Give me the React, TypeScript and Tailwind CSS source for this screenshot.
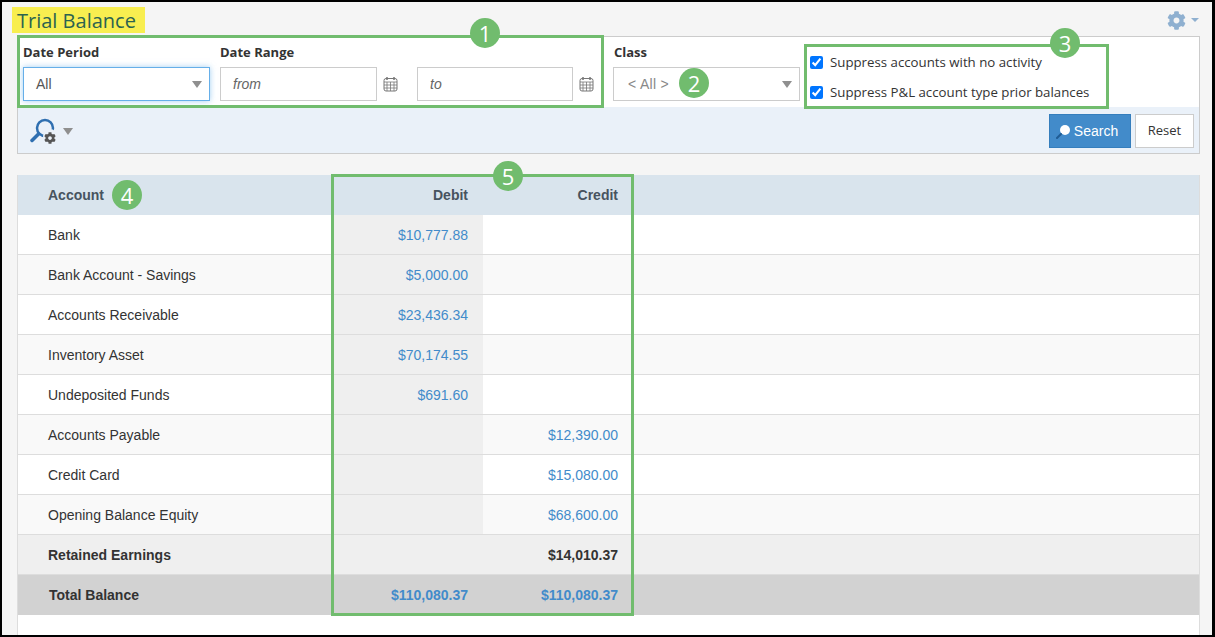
import { FaCog } from "react-icons/fa";

const openSans = "font-['Open_Sans',sans-serif]";

const rows = [
  { name: "Bank", debit: "$10,777.88", credit: "" },
  { name: "Bank Account - Savings", debit: "$5,000.00", credit: "" },
  { name: "Accounts Receivable", debit: "$23,436.34", credit: "" },
  { name: "Inventory Asset", debit: "$70,174.55", credit: "" },
  { name: "Undeposited Funds", debit: "$691.60", credit: "" },
  { name: "Accounts Payable", debit: "", credit: "$12,390.00" },
  { name: "Credit Card", debit: "", credit: "$15,080.00" },
  { name: "Opening Balance Equity", debit: "", credit: "$68,600.00" },
];

function Caret() {
  return <span className="w-0 h-0 border-l-[5px] border-r-[5px] border-t-[7px] border-l-transparent border-r-transparent border-t-[#8f8f8f]" />;
}

function CalendarIcon() {
  return (
    <svg width="15" height="16" viewBox="0 0 15 16" fill="none" stroke="#777" strokeWidth="1">
      <rect x="1" y="2.5" width="13" height="12.5" rx="2" />
      <path d="M1 6h13M4 6v9M7.5 6v9M11 6v9M1 9h13M1 12h13" strokeWidth="0.8" />
      <path d="M4 1v3M11 1v3" strokeWidth="1.5" />
    </svg>
  );
}

function Select({ text, focused }: { text: string; focused?: boolean }) {
  return (
    <div className={`h-[34px] w-[187px] flex items-center justify-between pr-[7px] bg-white border ${focused ? "pl-[12px] border-[#66afe9] shadow-[0_0_6px_rgba(102,175,233,0.6)]" : "pl-[14px] border-[#ccc]"}`}>
      <span className={`font-['Liberation_Sans',sans-serif] text-[14px] ${focused ? "text-[#555]" : "text-[#888] tracking-[0.3px]"}`}>{text}</span>
      <Caret />
    </div>
  );
}

function DateInput({ text, width }: { text: string; width: string }) {
  return (
    <div className={`h-[34px] ${width} flex items-center pl-[12px] bg-white border border-[#ccc] font-['Liberation_Sans',sans-serif] text-[14px] italic text-[#666]`}>
      {text}
    </div>
  );
}

function Check({ label }: { label: string }) {
  return (
    <label className={`h-[30px] flex items-center gap-[7px] ${openSans} text-[13.25px] text-[#333]`}>
      <input type="checkbox" checked readOnly className="w-[13px] h-[13px] m-0 accent-[#0075ff]" />
      <span className="pt-[2px]">{label}</span>
    </label>
  );
}

function Badge({ n, className }: { n: number; className: string }) {
  return (
    <div className={`absolute w-[30px] h-[30px] rounded-full bg-[#71bc6e] text-white flex items-center justify-center ${openSans} text-[22px] leading-none ${className}`}>
      {n}
    </div>
  );
}

function Row({ name, debit, credit, odd }: { name: string; debit: string; credit: string; odd: boolean }) {
  return (
    <div className={`h-10 flex items-center border-b border-[#ddd] text-[14px] ${odd ? "bg-[#f9f9f9]" : "bg-white"}`}>
      <div className="w-[315px] pl-[30px] pt-[2px] text-[#333]">{name}</div>
      <div className="w-[150px] h-full flex items-center justify-end pr-[15px] pt-[2px] bg-[#efefef] text-[#428bca]">{debit}</div>
      <div className="w-[150px] pr-[15px] pt-[2px] text-right text-[#428bca]">{credit}</div>
    </div>
  );
}

export default function App() {
  return (
    <div className="relative w-[1215px] h-[637px] overflow-hidden">
      <div className="w-full h-full border-2 border-black border-r-[3px] bg-[#f5f5f5] flex flex-col">
        {/* Title */}
        <div className="h-[34px] pt-[5px] pl-[10px] pr-[13px] flex justify-between shrink-0">
          <h1 className={`w-[133px] h-[26px] bg-[#f8ee50] pl-[5px] ${openSans} text-[20px] font-medium leading-[27px] text-[#2b6350]`}>
            Trial Balance
          </h1>
          <div className="flex items-center gap-[5px] h-[26px] text-[#8fb0d0]">
            <FaCog size={19} />
            <span className="w-0 h-0 border-l-[4px] border-r-[4px] border-t-[4px] border-l-transparent border-r-transparent border-t-[#8fb0d0]" />
          </div>
        </div>

        {/* Filters */}
        <div className="ml-[15px] w-[1183px] border border-[#ccc] bg-white shrink-0">
          <div className="h-[70px] pl-[5px] flex">
            <div className="w-[187px] mr-[10px]">
              <div className={`h-[30px] pt-[2px] flex items-center ${openSans} text-[13px] font-bold text-[#333]`}>Date Period</div>
              <Select text="All" focused />
            </div>
            <div className="mr-[40px]">
              <div className={`h-[30px] pt-[2px] flex items-center ${openSans} text-[13px] font-bold text-[#333]`}>Date Range</div>
              <div className="flex items-center">
                <DateInput text="from" width="w-[157px]" />
                <div className="w-[40px] pl-[6px]"><CalendarIcon /></div>
                <DateInput text="to" width="w-[156px]" />
                <div className="pl-[6px] w-[21px]"><CalendarIcon /></div>
              </div>
            </div>
            <div className="w-[187px] -ml-[21px] mr-[10px] pl-0">
              <div className={`h-[30px] pt-[2px] flex items-center pl-px ${openSans} text-[13px] font-bold text-[#333]`}>Class</div>
              <Select text="< All >" />
            </div>
            <div className="pt-[10px]">
              <Check label="Suppress accounts with no activity" />
              <Check label="Suppress P&L account type prior balances" />
            </div>
          </div>
          <div className="h-[46px] pt-[2px] bg-[#eaf1f9] flex items-center justify-between pl-[12px] pr-[5px]">
            <div className="flex items-center gap-[6px]">
              <svg width="28" height="26" viewBox="0 0 28 26" fill="none">
                <circle cx="15" cy="10" r="8" stroke="#2f6fb0" strokeWidth="2.5" />
                <path d="M8.5 16 2 22.5" stroke="#2f6fb0" strokeWidth="3.5" strokeLinecap="round" />
                <circle cx="20" cy="18" r="7" fill="#eaf1f9" />
              </svg>
              <span className="-ml-[20px] -mb-[14px] text-[#555] w-[13px]"><FaCog size={12} /></span>
              <Caret />
            </div>
            <div className="flex gap-[4px]">
              <button className="w-[82px] h-[34px] pr-[6px] flex items-center justify-center gap-[3px] bg-[#428bca] border border-[#357ebd] text-white font-['Liberation_Sans',sans-serif] text-[14px]">
                <svg width="15" height="15" viewBox="0 0 15 15">
                  <circle cx="9" cy="6" r="5" fill="white" />
                  <path d="M5 10 1 14" stroke="#1f5c94" strokeWidth="2" strokeLinecap="round" />
                </svg>
                Search
              </button>
              <button className={`w-[59px] h-[34px] bg-white border border-[#ccc] text-[#333] ${openSans} text-[13px]`}>Reset</button>
            </div>
          </div>
        </div>

        {/* Table */}
        <div className="mt-[21px] ml-[15px] w-[1183px] flex-1 bg-white border-l border-r border-[#ddd] font-['Liberation_Sans',sans-serif]">
          <div className="h-10 flex items-center bg-[#d9e4ed] text-[14px] font-bold text-[#47535f]">
            <div className="w-[315px] pl-[30px]">Account</div>
            <div className="w-[150px] pr-[15px] text-right">Debit</div>
            <div className="w-[150px] pr-[15px] text-right">Credit</div>
          </div>
          {rows.map((r, i) => (
            <Row key={r.name} {...r} odd={i % 2 === 1} />
          ))}
          <div className="h-10 pt-[2px] flex items-center bg-[#efefef] border-b border-[#ddd] text-[14px] font-bold text-[#333]">
            <div className="w-[315px] pl-[30px]">Retained Earnings</div>
            <div className="w-[150px]" />
            <div className="w-[150px] pr-[15px] text-right">$14,010.37</div>
          </div>
          <div className="h-10 flex items-center bg-[#d2d2d2] text-[14px] font-bold">
            <div className="w-[315px] pl-[31px] text-[#333]">Total Balance</div>
            <div className="w-[150px] pr-[15px] text-right text-[#428bca]">$110,080.37</div>
            <div className="w-[150px] pr-[15px] text-right text-[#428bca]">$110,080.37</div>
          </div>
        </div>
      </div>

      {/* Callouts */}
      <div className="absolute left-[17px] top-[35px] w-[587px] h-[73px] border-[3px] border-[#71bc6e]" />
      <div className="absolute left-[804px] top-[44px] w-[305px] h-[65px] border-[3px] border-[#71bc6e]" />
      <div className="absolute left-[331px] top-[174px] w-[303px] h-[442px] border-[3px] border-[#71bc6e]" />
      <Badge n={1} className="left-[470px] top-[18px]" />
      <Badge n={2} className="left-[679px] top-[68px]" />
      <Badge n={3} className="left-[1050px] top-[28px]" />
      <Badge n={4} className="left-[112px] top-[180px]" />
      <Badge n={5} className="left-[493px] top-[161px]" />
    </div>
  );
}
